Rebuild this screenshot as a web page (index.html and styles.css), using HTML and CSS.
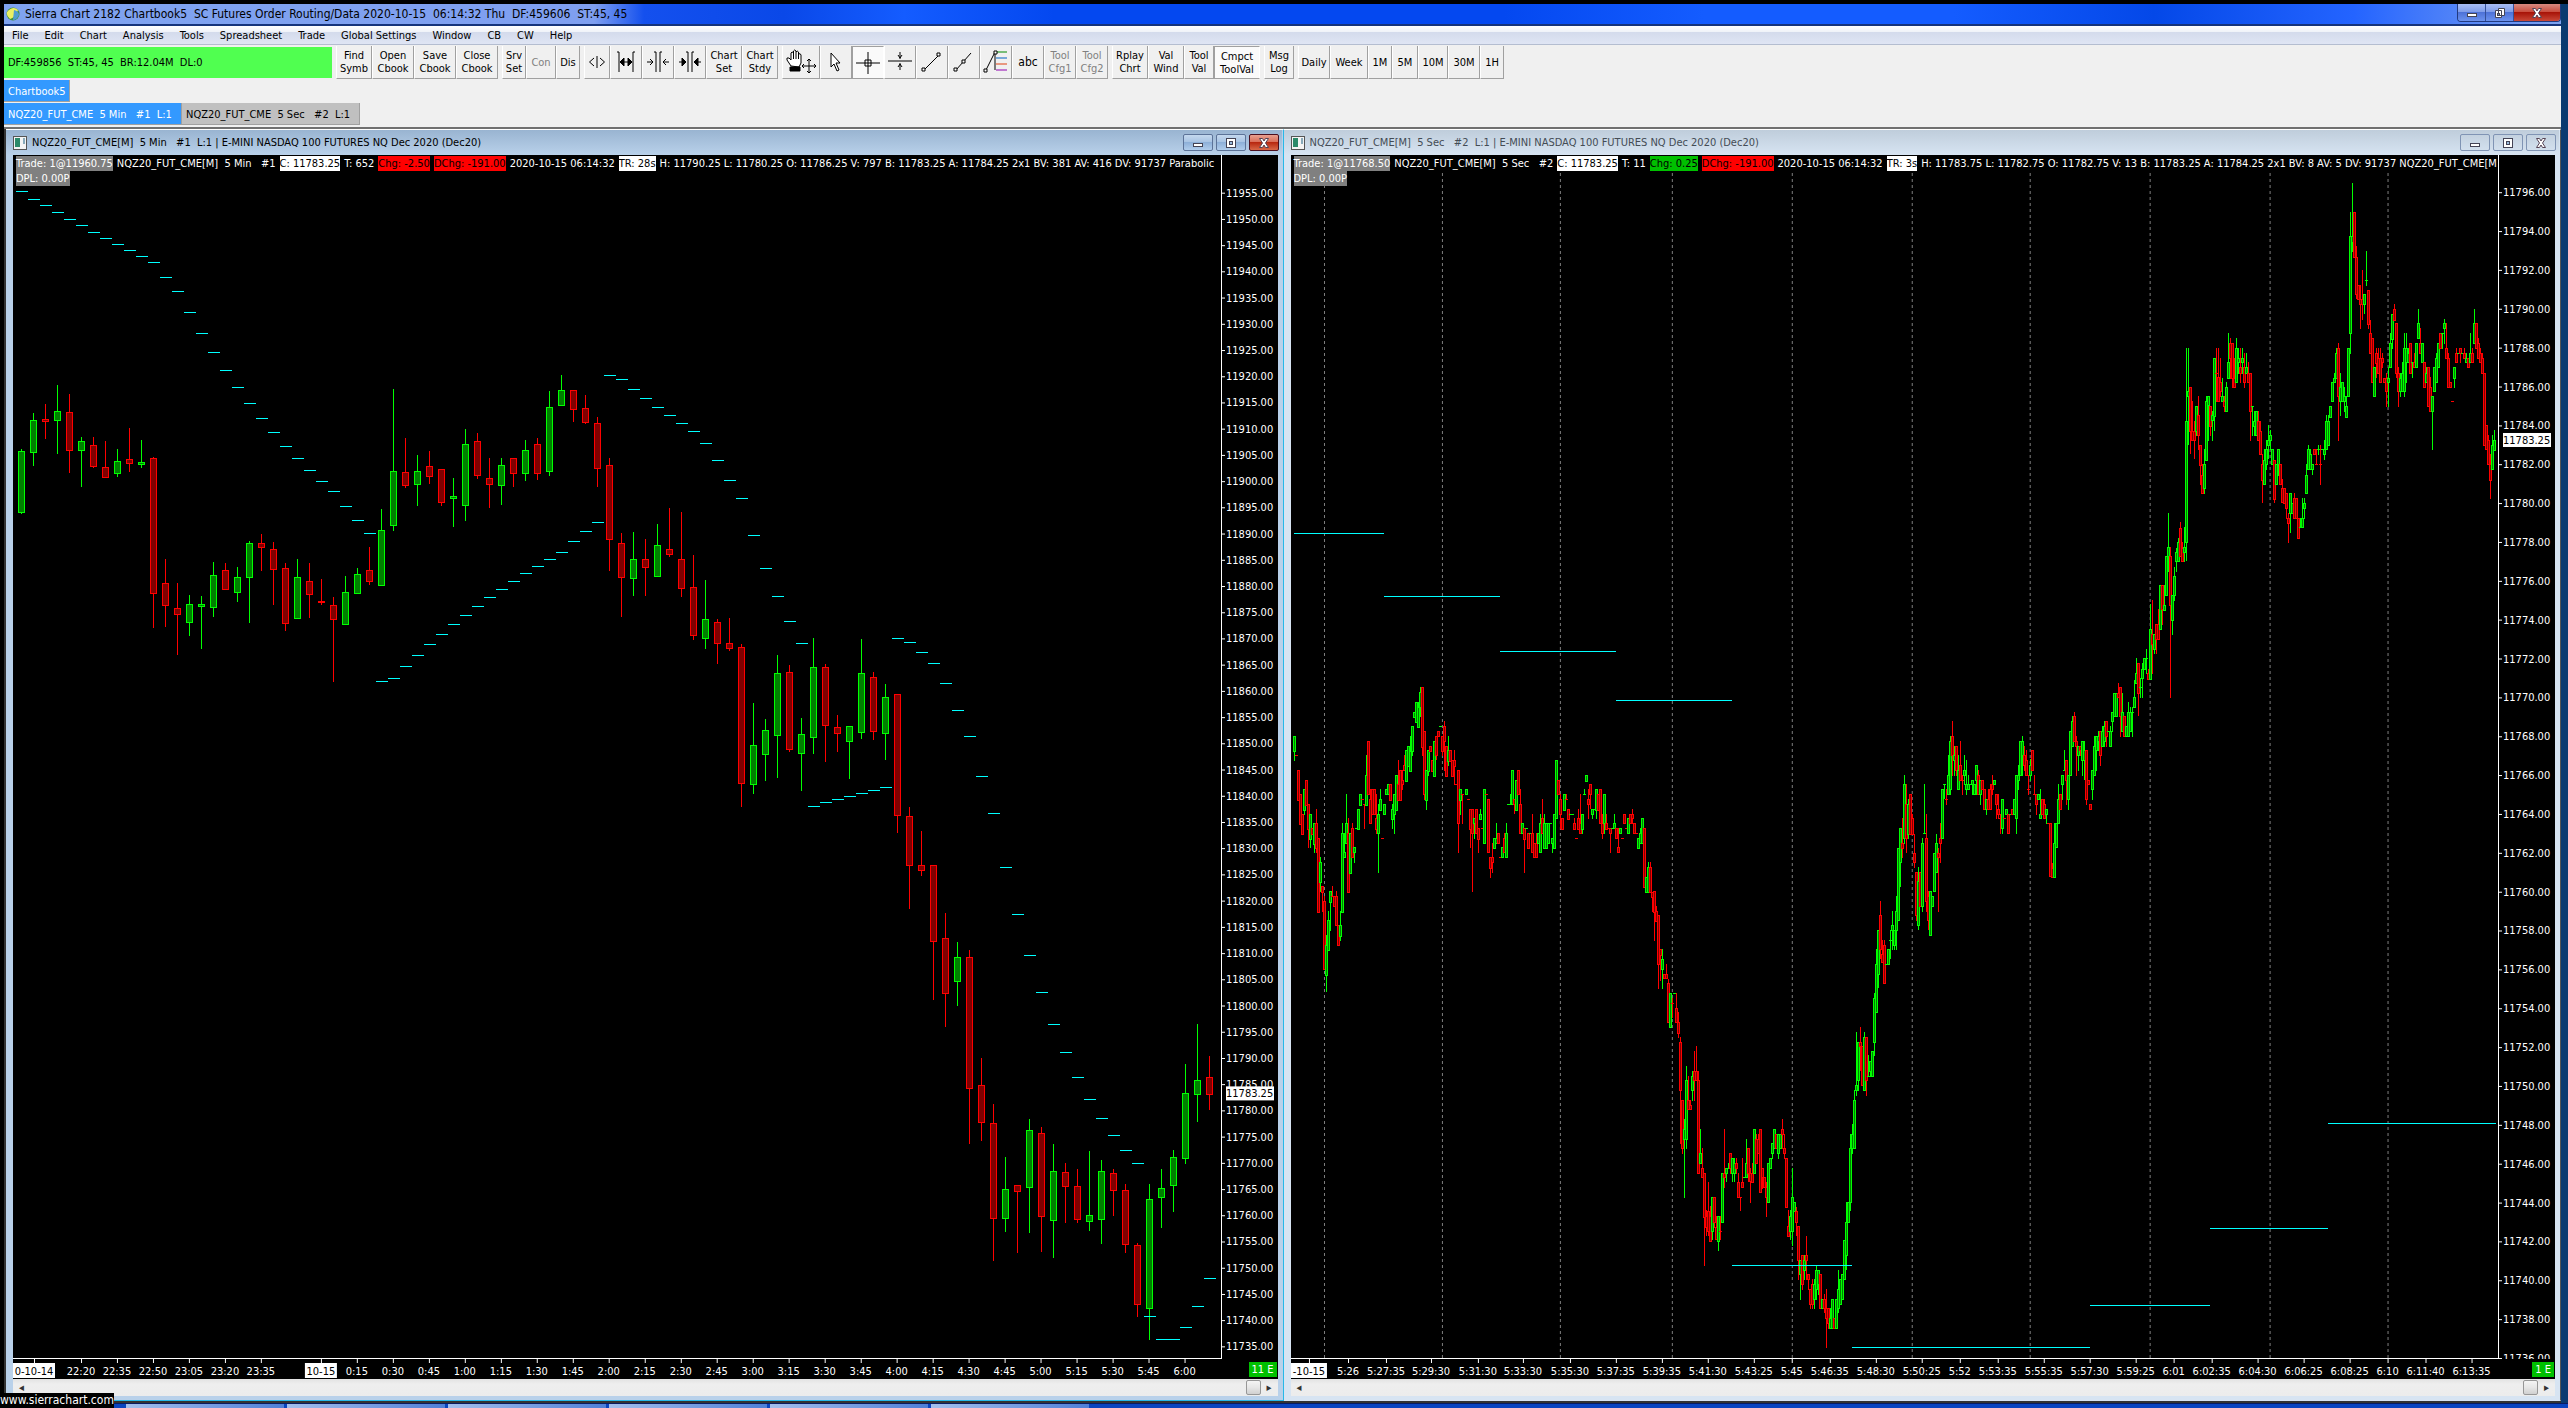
FILE: index.html
```html
<!DOCTYPE html>
<html lang="en">
<head>
    <meta charset="UTF-8">
    <meta name="viewport" content="width=device-width, initial-scale=1.0">
    <title>Sierra Chart 2182 Chartbook5</title>
    <link rel="stylesheet" href="styles.css">
</head>
<body>
    <div class="app">
        <header class="titlebar">
            <svg class="logo" width="14" height="16" viewBox="0 0 14 16"><circle cx="7" cy="8" r="6.5" fill="#3f8f3a"/><path d="M1 6 Q7 -1 12 4 Q9 12 4 13 Q0 10 1 6" fill="#e9ef63"/><path d="M8 4 Q13 5 13 9 Q11 14 7 14" fill="#4e9bd0"/></svg>
            <h1>Sierra Chart 2182 Chartbook5&nbsp; SC Futures Order Routing/Data 2020-10-15&nbsp; 06:14:32 Thu&nbsp; DF:459606&nbsp; ST:45, 45</h1>
            <div class="winbtns">
                <button class="min" aria-label="Minimize"><svg width="12" height="12"><rect x="1.500" y="6.500" width="9" height="3" fill="#fff" stroke="#445"/></svg></button>
                <button class="max" aria-label="Restore"><svg width="12" height="12"><path d="M4.500 1.500h6v7h-6zM1.500 3.500h6v7h-6z" fill="#fff" stroke="#445"/><rect x="3.500" y="6.500" width="2" height="2" fill="#68c" stroke="#445"/></svg></button>
                <button class="close" aria-label="Close"><svg width="12" height="12"><path d="M1.500 1.500h3l1.500 2.500 1.500-2.500h3l-3 4.500 3 4.500h-3l-1.500-2.500-1.500 2.500h-3l3-4.500z" fill="#fff" stroke="#545"/></svg></button>
            </div>
        </header>
        <nav class="menu">
            <a href="#">File</a><a href="#">Edit</a><a href="#">Chart</a><a href="#">Analysis</a><a href="#">Tools</a><a href="#">Spreadsheet</a><a href="#">Trade</a><a href="#">Global Settings</a><a href="#">Window</a><a href="#">CB</a><a href="#">CW</a><a href="#">Help</a>
        </nav>
        <div class="toolbar">
            <div class="status">DF:459856&nbsp; ST:45, 45&nbsp; BR:12.04M&nbsp; DL:0</div>
            <div class="group">
                <button class="w36">Find<br>Symb</button>
                <button class="w42">Open<br>Cbook</button>
                <button class="w42">Save<br>Cbook</button>
                <button class="w42">Close<br>Cbook</button>
            </div>
            <div class="group">
                <button class="w24">Srv<br>Set</button>
                <button class="w30" disabled>Con</button>
                <button class="w24">Dis</button>
            </div>
            <div class="group">
                <button class="w26" aria-label="Bar spacing"><svg width="18" height="22"><path d="M6 7L1.500 11L6 15M12 7l4.500 4L12 15M9 5v12"/></svg></button>
                <button class="w32" aria-label="Widen"><svg width="22" height="26"><path d="M2 3h2v20M20 3h-2v20M6 13h10" /><path class="f" d="M5 13l4-4v8zM17 13l-4-4v8z"/></svg></button>
                <button class="w32" aria-label="Narrow spacing"><svg width="24" height="26"><path d="M8 3h2v20M16 3h-2v20M1 13h6M4 10l3 3-3 3M23 13h-6M20 10l-3 3 3 3"/></svg></button>
                <button class="w32" aria-label="Narrow bars"><svg width="24" height="26"><path d="M8 3h2v20M16 3h-2v20M1 13h6M23 13h-6"/><path class="f" d="M8 13l-4-4v8zM16 13l4-4v8z"/></svg></button>
                <button class="w36">Chart<br>Set</button>
                <button class="w36">Chart<br>Stdy</button>
            </div>
            <div class="group">
                <button class="w38" aria-label="Hand"><svg width="32" height="28"><path class="w" d="M6 18L2 12q-1-3 2-2l2 2V5q1-2 2.500 0V3q1-2 2.500 0v1q1-2 2.500 0v2q2-1 2.500 1v8l-2 4z"/><path d="M8.500 5v6M11 4v7M13.500 5v6"/><path class="f" d="M5 19h10v4H5z"/><path d="M24 11v14M17 18h14M22 13l2-2 2 2M22 23l2 2 2-2M19 16l-2 2 2 2M29 16l2 2-2 2"/></svg></button>
                <button class="w32" aria-label="Pointer"><svg width="16" height="24"><path class="w" d="M3 3v14l3-3 3 7 2-1-3-7h4z"/></svg></button>
                <button class="w32 on" aria-label="Cross"><svg width="26" height="26"><path d="M13 2v22M1 13h24M10 10h6v6h-6z"/></svg></button>
                <button class="w32" aria-label="Horizontal"><svg width="26" height="26"><path d="M1 12h24M13 3v7M13 14v7M11 6l2 3 2-3M11 18l2-3 2 3"/></svg></button>
                <button class="w32" aria-label="Line"><svg width="26" height="26"><path d="M5 21L20 6"/><path class="w" d="M3 19h3v3H3zM18 4h3v3h-3z"/></svg></button>
                <button class="w32" aria-label="Ray"><svg width="26" height="26"><path d="M5 21L20 4"/><path class="w" d="M3 19h3v3H3zM11 11h3v3h-3z"/></svg></button>
                <button class="w32" aria-label="Retracement"><svg width="26" height="28"><path d="M3 22L12 4v18"/><path d="M13 4h11" stroke="#008a00"/><path d="M13 10h11" stroke="#0060c0"/><path d="M13 16h11" stroke="#e04010"/><path d="M13 22h11" stroke="#9000b0"/><path class="w" d="M1 21h3v3H1zM11 3h3v3h-3z"/></svg></button>
                <button class="w32 abc">abc</button>
                <button class="w32" disabled>Tool<br>Cfg1</button>
                <button class="w32" disabled>Tool<br>Cfg2</button>
            </div>
            <div class="group">
                <button class="w36">Rplay<br>Chrt</button>
                <button class="w36">Val<br>Wind</button>
                <button class="w30">Tool<br>Val</button>
                <button class="w46 on">Cmpct<br>ToolVal</button>
            </div>
            <div class="group">
                <button class="w30">Msg<br>Log</button>
            </div>
            <div class="group">
                <button class="w32">Daily</button>
                <button class="w38">Week</button>
                <button class="w24">1M</button>
                <button class="w26">5M</button>
                <button class="w30">10M</button>
                <button class="w32">30M</button>
                <button class="w24">1H</button>
            </div>
        </div>
        <div class="tabs"><a class="cur" href="#">Chartbook5</a></div>
        <div class="tabs sheets"><a class="cur" href="#">NQZ20_FUT_CME&nbsp; 5 Min&nbsp;&nbsp; #1&nbsp; L:1</a><a href="#">NQZ20_FUT_CME&nbsp; 5 Sec&nbsp;&nbsp; #2&nbsp; L:1</a></div>

        <main class="mdi">
            <section class="win active">
                <div class="wintitle">
                    <svg width="14" height="14"><rect x=".5" y=".5" width="13" height="13" fill="#f4f4f4" stroke="#555"/><path d="M2 2h5v9H2z" fill="#2c8a6a"/><path d="M10 2h2v6h-2z" fill="#8ab"/></svg>
                    <h2>NQZ20_FUT_CME[M]&nbsp; 5 Min&nbsp;&nbsp; #1&nbsp; L:1 | E-MINI NASDAQ 100 FUTURES NQ Dec 2020 (Dec20)</h2>
                    <button aria-label="Minimize chart"><svg width="12" height="12"><rect x="1.500" y="6.500" width="9" height="3" fill="#fff" stroke="#445"/></svg></button>
                    <button aria-label="Maximize chart"><svg width="12" height="12"><rect x="1.500" y="1.500" width="9" height="9" fill="#fff" stroke="#445"/><rect x="4.500" y="4.500" width="3" height="3" fill="#9bd" stroke="#445"/></svg></button>
                    <button class="close" aria-label="Close chart"><svg width="12" height="12"><path d="M1.500 1.500h3l1.500 2.500 1.500-2.500h3l-3 4.500 3 4.500h-3l-1.500-2.500-1.500 2.500h-3l3-4.500z" fill="#fff" stroke="#545"/></svg></button>
                </div>
                <div class="chart">
                    <div class="plot">
                        <svg id="plot1" viewBox="13 155 1208 1204" preserveAspectRatio="none"></svg>
                        <div class="info">
                            <p><span class="gray">Trade: 1@11960.75</span><span>NQZ20_FUT_CME[M]&nbsp; 5 Min&nbsp;&nbsp; #1</span><span class="white">C: 11783.25</span><span>T: 652</span><span class="red">Chg: -2.50</span><span class="red">DChg: -191.00</span><span>2020-10-15 06:14:32</span><span class="white">TR: 28s</span><span>H: 11790.25 L: 11780.25 O: 11786.25 V: 797 B: 11783.25 A: 11784.25 2x1 BV: 381 AV: 416 DV: 91737 Parabolic</span></p>
                            <p><span class="gray">DPL: 0.00P</span></p>
                        </div>
                    </div>
                    <svg class="prices" id="prices1"></svg>
                    <svg class="times" id="times1"></svg>
                    <span class="mode">11 E</span>
                </div>
                <div class="scroll"><button aria-label="Scroll left">◂</button><input type="range" value="100" aria-label="Chart position"><button aria-label="Scroll right">▸</button></div>
            </section>
            <section class="win">
                <div class="wintitle">
                    <svg width="14" height="14"><rect x=".5" y=".5" width="13" height="13" fill="#f4f4f4" stroke="#555"/><path d="M2 2h5v9H2z" fill="#2c8a6a"/><path d="M10 2h2v6h-2z" fill="#8ab"/></svg>
                    <h2>NQZ20_FUT_CME[M]&nbsp; 5 Sec&nbsp;&nbsp; #2&nbsp; L:1 | E-MINI NASDAQ 100 FUTURES NQ Dec 2020 (Dec20)</h2>
                    <button aria-label="Minimize chart"><svg width="12" height="12"><rect x="1.500" y="6.500" width="9" height="3" fill="#fff" stroke="#445"/></svg></button>
                    <button aria-label="Maximize chart"><svg width="12" height="12"><rect x="1.500" y="1.500" width="9" height="9" fill="#fff" stroke="#445"/><rect x="4.500" y="4.500" width="3" height="3" fill="#9bd" stroke="#445"/></svg></button>
                    <button aria-label="Close chart"><svg width="12" height="12"><path d="M1.500 1.500h3l1.500 2.500 1.500-2.500h3l-3 4.500 3 4.500h-3l-1.500-2.500-1.500 2.500h-3l3-4.500z" fill="#fff" stroke="#545"/></svg></button>
                </div>
                <div class="chart">
                    <div class="plot">
                        <svg id="plot2" viewBox="1291 155 1208 1204" preserveAspectRatio="none"></svg>
                        <div class="info">
                            <p><span class="gray">Trade: 1@11768.50</span><span>NQZ20_FUT_CME[M]&nbsp; 5 Sec&nbsp;&nbsp; #2</span><span class="white">C: 11783.25</span><span>T: 11</span><span class="green">Chg: 0.25</span><span class="red">DChg: -191.00</span><span>2020-10-15 06:14:32</span><span class="white">TR: 3s</span><span>H: 11783.75 L: 11782.75 O: 11782.75 V: 13 B: 11783.25 A: 11784.25 2x1 BV: 8 AV: 5 DV: 91737 NQZ20_FUT_CME[M</span></p>
                            <p><span class="gray">DPL: 0.00P</span></p>
                        </div>
                    </div>
                    <svg class="prices" id="prices2"></svg>
                    <svg class="times" id="times2"></svg>
                    <span class="mode">1 E</span>
                </div>
                <div class="scroll"><button aria-label="Scroll left">◂</button><input type="range" value="100" aria-label="Chart position"><button aria-label="Scroll right">▸</button></div>
            </section>
        </main>
    </div>
    <div class="taskbar"><i></i><i></i><i></i><i></i><i></i><i></i></div>
    <div class="watermark">www.sierrachart.com</div>
    <script src="chart.js"></script>
</body>
</html>
```

FILE: styles.css
```css
* {
    margin: 0;
    padding: 0;
    box-sizing: border-box;
}

body {
    position: relative;
    display: flex;
    flex-direction: column;
    height: 100vh;
    padding-top: 4px;
    background: #000;
    font: 11px/16px "DejaVu Sans Condensed", "DejaVu Sans", sans-serif;
    color: #000;
    overflow: hidden;
}

a {
    color: inherit;
    text-decoration: none;
}

button {
    font: inherit;
    color: inherit;
    border: 0;
    background: none;
}

svg {
    display: block;
    flex: none;
}

.app {
    flex: 1;
    min-height: 0;
    display: flex;
    flex-direction: column;
    border-left: 4px solid #000;
    border-right: 7px solid #0a3a70;
    background: #f0f0f0;
}

/* main title bar */
.titlebar {
    display: flex;
    align-items: center;
    height: 22px;
    padding-left: 2px;
    border-bottom: 2px solid #16347c;
    background: linear-gradient(90deg, #7fa3f0 0, #7f9ff0 590px, #1450ee 640px, #0a48e8 780px, #145cff 900px, #0448f0 1050px, #0448f0 1500px, #145cff 1700px, #145cff 1950px, #0448e8 2150px, #2464ff 2350px, #7fa3f0 100%);
}

.titlebar h1 {
    flex: 1;
    padding-left: 5px;
    font-size: 12px;
    font-weight: normal;
}

.winbtns {
    display: flex;
    align-self: flex-start;
    height: 18px;
    border: 1px solid #223a80;
    border-top: 0;
    border-radius: 0 0 4px 4px;
    overflow: hidden;
}

.winbtns button {
    display: flex;
    align-items: center;
    justify-content: center;
    width: 28px;
    border-right: 1px solid #34509a;
    background: linear-gradient(#a8bdf4, #7c9ae8 50%, #4d72d8 50%, #6c92ee);
}

.winbtns .close {
    width: 46px;
    border-right: 0;
    background: linear-gradient(#d88a80, #c8493a 50%, #a81408 50%, #c84838);
}

.menu {
    display: flex;
    align-items: center;
    gap: 16px;
    height: 19px;
    padding: 2px 0 0 8px;
    border-bottom: 1px solid #b4bdd0;
    background: linear-gradient(#fff, #eef1f8 35%, #d4dbec 36%, #dfe5f4);
}

/* toolbar */
.toolbar {
    display: flex;
    align-items: flex-start;
    gap: 4px;
    height: 35px;
    padding-top: 1px;
}

.status {
    width: 328px;
    height: 31px;
    margin-top: 1px;
    padding-left: 4px;
    line-height: 31px;
    background: #50ff50;
}

.group {
    display: flex;
    height: 33px;
}

.group button {
    display: flex;
    align-items: center;
    justify-content: center;
    height: 33px;
    line-height: 13px;
    border-right: 1px solid #a0a0a0;
    border-bottom: 1px solid #a0a0a0;
    border-left: 1px solid #fff;
    background: #f0f0f0;
    white-space: nowrap;
}

.group .on {
    border-top: 1px solid #a0a0a0;
    border-left-color: #a0a0a0;
    border-right-color: #fff;
    background: #fafafa;
}

.group button:disabled {
    color: #808080;
}

.group .abc {
    font-size: 12px;
}

.w24 { width: 24px; }
.w26 { width: 26px; }
.w30 { width: 30px; }
.w32 { width: 32px; }
.w36 { width: 36px; }
.w38 { width: 38px; }
.w42 { width: 42px; }
.w46 { width: 46px; }

.group svg path {
    fill: none;
    stroke-width: 1;
}

.group svg path:not([stroke]) {
    stroke: #000;
}

.group svg .f {
    fill: #000;
}

.group svg .w {
    fill: #fff;
}

.tabs {
    display: flex;
    align-items: flex-start;
    height: 22px;
}

.tabs a {
    height: 22px;
    padding: 2px 3px 0 4px;
    line-height: 19px;
    border-right: 1px solid #a0a0a0;
    border-bottom: 1px solid #a0a0a0;
    background: #c0c0c0;
    white-space: pre;
}

.tabs .cur {
    background: #3399ff;
    color: #fff;
}

.sheets {
    height: 25px;
    padding-top: 1px;
}

.sheets a {
    min-width: 178px;
}

/* chart windows */
.mdi {
    flex: 1;
    min-height: 0;
    display: flex;
    padding: 0 0 2px 2px;
    border-top: 2px solid #707070;
    background: #333;
}

.win {
    flex: 1;
    min-width: 0;
    display: flex;
    flex-direction: column;
    padding: 0 5px 4px 7px;
    border-top: 1px solid #fff;
    border-right: 1px solid #555;
    border-bottom: 1px solid #d7e4f2;
    background: #d7e4f2;
}

.win.active {
    border-right: 1px solid #27b8e8;
    border-bottom: 1px solid #27b8e8;
    background: #b9d1ea;
}

.wintitle {
    display: flex;
    align-items: center;
    gap: 3px;
    height: 25px;
    margin: 0 -4px 0 -7px;
    padding: 0 3px 0 7px;
    background: linear-gradient(#bfcddb, #d7e4f2);
    color: #444c55;
}

.active .wintitle {
    background: linear-gradient(#99b4d1, #b9d1ea);
    color: #000;
}

.wintitle h2 {
    flex: 1;
    padding-left: 2px;
    font-size: 11px;
    font-weight: normal;
    white-space: nowrap;
}

.wintitle button {
    display: flex;
    align-items: center;
    justify-content: center;
    width: 30px;
    height: 17px;
    border: 1px solid #8094b4;
    border-radius: 2px;
}

.active .wintitle button {
    border-color: #5c7398;
    background: linear-gradient(#c4d8ee, #a6c2e2 50%, #8eb0d8 50%, #b0cdec);
}

.active .wintitle .close {
    border-color: #4c1020;
    background: linear-gradient(#e8a090, #d86a54 50%, #b82810 50%, #d86848);
}

.chart {
    flex: 1;
    min-height: 0;
    display: grid;
    grid-template-columns: 1fr 57px;
    grid-template-rows: 1fr 20px;
    background: #000;
    color: #fff;
}

.plot {
    position: relative;
    min-width: 0;
    min-height: 0;
    overflow: hidden;
}

.plot svg {
    position: absolute;
    width: 100%;
    height: 100%;
    shape-rendering: crispEdges;
}

/* values line over the plot */
.info {
    position: absolute;
    top: 1px;
    left: 3px;
    line-height: 15px;
    white-space: nowrap;
}

.info p {
    display: flex;
    gap: 4px;
}

.gray { background: #808080; }
.white { background: #fff; color: #000; }
.red { background: #f00; color: #000; }
.green { background: #00c000; color: #000; }

.prices {
    width: 57px;
    height: 100%;
    border-left: 1px solid #fff;
}

.times {
    grid-row: 2;
    grid-column: 1 / 3;
    width: 100%;
    height: 20px;
}

.chart text {
    fill: #fff;
}

.chart .label-dark {
    fill: #000;
}

.mode {
    grid-row: 2;
    grid-column: 2;
    justify-self: end;
    align-self: center;
    padding: 0 3px;
    margin-right: 1px;
    line-height: 15px;
    background: #00c000;
}

.scroll {
    display: flex;
    height: 17px;
    background: linear-gradient(#e2e2e2, #eee 30%, #ececec);
}

.scroll button {
    width: 17px;
    line-height: 17px;
    text-align: center;
    color: #333;
}

.scroll input {
    flex: 1;
    min-width: 0;
    height: 17px;
    appearance: none;
    background: none;
}

.scroll input::-webkit-slider-thumb {
    appearance: none;
    width: 15px;
    height: 15px;
    border: 1px solid #979797;
    border-radius: 2px;
    background: linear-gradient(#f4f4f4, #e6e6e6 50%, #d0d0d0);
}

/* bottom strip */
.taskbar {
    display: flex;
    gap: 3px;
    height: 5px;
    padding-left: 126px;
    border-top: 1px solid #0a1c60;
    background: #0a44c0;
}

.taskbar i {
    width: 158px;
    background: linear-gradient(90deg, #a4bfec, #4f7fd8);
}

.watermark {
    position: absolute;
    left: 0;
    bottom: 0;
    min-width: 112px;
    font-size: 12px;
    line-height: 15px;
    background: #000;
    color: #fff;
}
```

FILE: chart.js
```js
const UP = ["#00ff00", "#008000"],
      DOWN = ["#ff0000", "#800000"];

// every bar: u/d, then high,top,bottom,low  (high,top,bottom / top,bottom / flat)
const bars5min = `
u449,451,512,513 u413,420,452,465 d404,419,421,438 u385,411,420,453 d394,412,450,472
u437,441,450,486 d437,445,466,467 d441,467,477,477 u449,461,473,476 d428,459,463,471
u440,462,464,467 d457,458,593,627 d559,583,605,626 d583,608,614,654 u595,604,622,635
u596,604,606,648 u562,575,607,616 d563,570,589,589 u567,577,592,601 u541,543,577,622
d534,543,547,570 d542,549,569,604 d563,568,623,630 u559,577,618,618 d563,581,594,617
d579,601,602,604 d597,605,619,681 u576,592,624,624 u568,574,593,593 d547,570,581,584
u509,530,585,585 u389,471,525,530 d438,472,485,487 u455,471,484,505 d451,466,476,483
d469,469,502,505 u478,496,498,526 u429,444,505,520 d433,441,475,478 d458,478,484,507
u458,465,485,504 d458,458,473,486 u440,450,473,480 d438,444,473,479 u391,407,471,475
u375,390,405,405 d390,390,409,421 d395,408,422,423 d417,423,468,486 d458,465,539,570
d533,543,577,616 u532,559,578,595 d539,559,567,595 u524,545,576,576 d508,549,554,556
d512,559,588,596 d555,587,635,639 u580,619,638,648 d619,622,643,663 d618,643,648,650
d644,647,783,806 u703,745,784,793 u719,730,754,780 u655,673,735,777 d665,672,749,751
u718,734,753,790 u638,667,737,753 d664,667,725,761 d715,727,733,751 u726,726,741,778
u639,673,732,738 d672,677,731,739 u684,697,733,759 d694,694,815,832 d807,816,865,908
d831,865,870,875 d865,865,941,999 d913,938,993,1026 u942,957,981,1005 d950,957,1088,1143
d1058,1085,1122,1140 d1104,1123,1218,1260 u1157,1189,1218,1231 d1185,1185,1191,1252 u1119,1130,1187,1232
d1127,1133,1216,1251 u1144,1171,1220,1257 d1163,1172,1186,1222 d1169,1186,1219,1222 u1151,1215,1221,1230
u1160,1171,1219,1243 d1169,1173,1190,1215 d1184,1190,1244,1252 d1243,1245,1304,1316 u1184,1199,1308,1339
u1169,1188,1197,1227 u1150,1157,1185,1211 u1064,1093,1158,1163 u1024,1080,1094,1121 d1056,1077,1094,1109`;

// first number of a line is the x of its first bar
const bars5sec = `
1294 u736,736,751,760 d755 d770,800 d794,824 d814,834 u789,789,810,814 d780,805 d804,804,829,847 u814,814,839,847 d828,834
1314 u823,823,844,852 d809,823,848,852 d838,912 u857,862,882,891 d886,886,892,911 d896,901,969 u935,945,975,991 u911,920,950 u891,891,902,930 d886,896,896
1334 d896,906 d891,896,925 d925,945 u911,925,936,940 u823,833,912 u833,852,857 u794,823,843 d818,833,892 u833,873 d823,828,857
1354 u847,847,852,862 u828 u809,829 u794,805 d799 d804,804,804,828 u755,775,805 d741,794 d789,799,823 d789,814
1374 d789,814 d794,818,829,833 u804,814,833,872 u789,799,810 d838 u804,814 u789,794 u784,794 d784,800 u804,809,819,828
1394 u794,794,814,833 u775,810 d760,784,800 d770,800 d770,780,784,789 d755,765,770 u750,781 u746,766 u736,751,771 u726,726,751,755
1414 u712,717 u702,722 u702,707,727 u687,692,707,716 d687,687,747,755 d731,731,794,799 u770,770,800,809 u750,750,771,775 d746,751 d760,771
1434 u741,776 d736,736,755,759 d731,736 u726 d736,736,751,755 d721,726,741,770 d746,776 u736,750,761,765 d750,761 d760,776
1454 d750,760,766,784 d784 d770,770,823,852 u789,789,800,814 d794,794,794,823
1466 u789,794 d799 d809,809,829,847 d809,809,833,891 u818,818,823,838 d809,833 d828,828,839,852 u809,814,819 d828 u789,843
1486 d794 d799,852 d857,857,868,877 d843,857,862,872 u838,848 u823,838,843 d833,843 d857 u847,857 d833,838,852
1506 u823,833,857 u804 u794,804,804 u770,804 d799,799,804,813 u780,810 d770,794 d789,804,833 u823,833 d828,828,839,872
1526 u828 d833,848 u833 d814,833,852 d843,857 d833,843,857 u833,843 u814,823,852 d799,818,833 u814,823,848
1546 u823,848 u823,843 u823 u838,838,843,852 u814,848 u760,818 d780,794 d794,799,814,828 d818,829 u794,810
1566 d794,799,799 d809,819 u814 u814 d818,823,829 d838 d809,818,829 d794,823,833 u814,814,829,833 u789,794,794
1586 u775,781 d789,799,804,818 d784,784,794,808 u809,809,814,818 u809 u789,789,810,818 d794,810 d789,823 d814,823,833,838 u794,794,823,833
1606 d814,823,829 d828 d828,828,833,852 u828 u814,823,828 d828,838 d828,847,852 u828,833 d838 d814,823
1626 d828 u818,833 d814,823 d809,814,818,823 d823,833 d833 u838,848 u828,833,843 u818,843 d828,887
1646 u877,892 u862,867,892 d862,867,892 d892,892,897,911 d891,891,912,940 d906,911,921 d915,915,964,988 d949,949,955,980 u949,959,969,988 d974,978
1666 d964,974,978 d979,983,1022 u993,1027 d998,1003,1003,1017 u993 d993,1008,1022 d1012,1022,1033,1037 d1037,1042,1090,1143 d1100,1100,1148,1153 u1119,1129,1139,1197
1686 u1066,1080,1139,1148 d1076,1100,1109 d1100,1105,1109 u1071,1076,1090,1100 d1051,1071,1080,1100 d1046,1071,1080 d1071,1080,1173 u1129,1153,1163 d1148,1168,1177 d1173,1173,1217,1265
1706 d1210,1216,1227,1235 d1182,1211,1231,1235 d1206,1216,1241 u1197,1197,1231,1239 d1197,1197,1222,1227 d1216,1227,1239 u1216,1216,1241,1250 d1216,1231,1231,1239 u1173,1222 d1129,1173,1177,1187
1726 u1168,1168,1173,1181 u1163,1168,1168 d1153,1153,1168,1173 u1158,1158,1173,1181 u1158,1163,1173,1181 d1158,1163,1168,1173 d1173,1182,1197 d1197,1197,1197,1210 d1158,1182,1187 u1177
1746 u1139,1163,1177 d1148,1148,1173,1181 d1168,1173,1181,1202 d1163,1173,1182 u1129,1173 d1134,1139,1163 d1134,1139,1153 d1129,1192 d1168,1168,1177,1188 d1177,1187
1766 d1182,1187,1197,1216 u1163,1202 u1158,1168 u1143,1143,1153,1158 u1129,1148 d1134,1148 u1134,1134,1153,1158 u1134,1148 d1119,1129,1134,1148 d1134,1148,1153,1158
1786 d1158,1207 d1210,1226,1236 u1210,1216,1231,1239 u1168,1197,1231,1245 u1202,1211 d1207,1211,1222,1235 d1226,1226,1260,1279 u1260,1260,1274,1299 d1255,1255,1284,1289 u1255,1260,1270,1279
1806 d1236,1255,1260,1279 d1274,1274,1279,1289 d1289,1289,1304,1308 d1279,1284,1304,1308 u1279,1284,1299,1308 u1265,1270,1289,1299 u1270,1270,1284,1294 d1274,1308 u1299,1308 d1294,1299,1308,1312
1826 d1289,1308,1318,1347 d1308,1308,1323,1328 u1308,1318,1328 u1299,1328 d1318,1328 u1299,1328 u1270,1289,1308,1312 u1279,1304 u1274,1299 u1240,1279
1846 u1202,1222,1255,1269 u1202,1222 u1134,1148,1202,1210 u1124,1134,1148,1153 u1090,1100,1148 u1032,1085,1090,1095 u1042,1042,1080,1090 d1027,1042,1046,1070 d1046,1085 u1032,1037,1090
1866 d1037,1037,1080,1095 u1055,1076,1076 u1061,1061,1071,1076 u1051,1076 u993,998,1042,1055 u949,964,1012 u930,930,974,987 d901,915,949,958 d940,954,962 d940,945,983
1886 u964 u949,964 u930,940,940,958 u911,925,930,949 u930,930,945,949 u896,911,930,949 u848,920 u828,828,862,886 d818,843,848,857 u775,784,838,843
1906 d784,804,838,852 u799,804,834,838 d794,834 d814,818,834 d834,853,862,867 d872,872,915,920 u867,881,925,929 d872,906 u838,843,906,911 u784,833,833
1926 d814,838,901,911 d891,896,920,929 u891,935 u896,906 u853,891 u834,843,872 d848,853,857,911 d823,838,843,862 u789,838 u784,784,784,798
1946 d789,799,799,804 u755,775,794 u736,741,789,794 d721,736,755,775 u746,755,760,775 d746,746,770,775 u755,770,789 d741,765,780 d775,780,780,794 u755,770,775,784
1966 u760,784,789,794 u775,784,789 u784 u780,780,784,794 u784,794 u765,765,780,794 d770,775,794 u780,780,794,804 d780,789 d789,809
1986 u799,799,809,814 d789,799,809 d784,789,809 d775,784,789,794 u780,784 d794,794,804,818 d794,809,814,818 d814,818,818,833 u799,799,828,833 d818
2006 u809,814 d814,833 u814 d809,814 u799,814 u775,775,818,833 u765,775,780,789 u741,775 u736,741,755,775 d746,755,765,770
2026 d750,760,775 d775,789,789,794 u759,765,775,780 d750,770 d775,794,794 d794,794,804,814 u794,799 u789,814,818 d799,814 d799,804,818
2046 u809,809,814,823 d823 d823,876 d863,868,877 u823,843,877 u823,847 u784,799,823 d794,809 u775,775,784,799 u750,770,770
2066 d760,760,780,804 u775,775,799,809 u731,775 u716,721,746 d712,716,741 d736,741,746,775 u746,746,755,770 d746,746,750,755 u741,741,760,775 u741,750,760,779
2086 d750,750,799,804 d780,784 d804,809 u770,770,789,799 u736,746,775 u736,736,750,770 u731,736,741,750 d731,731,755,765 u726,731,746 u721,726,741,746
2106 d721,721,736,746 u731 u726,731,746 u712,712,721,731 u693,716 u693,716 d683,693,697 d687,687,716,736 u693,712,731 d716,736
2126 u726,736 u702,712,736 u707,712,731 u707,712,712,736 u680,697,707 u658,673,683 d663,663,693,715 u678,687,687,697 u663,669,678,697 u658,669
2146 u649,658,658,673 d669,673,679 u604,629,679 d600,634,644,673 u634,634,649,653 d624,624,639,653 d609,624,639 u585,629 d585,585,609,624 u585,605,610
2166 u556,595 u513,547,556,571 d547,556,605,697 u595,595,620,634 u567,576,595,600 u548,552,561,571 u538,542,561 d522,528,556 d542,548,561 u527,547,552,561
2186 u348,421,542,560 u348,391,396,444 d387,387,431,453 d401,431,440 d421,431,440,458 u406,406,431,435 d396,415,435,449 d445,445,465,484 d464,475,493 u449,464,488,493
2206 u396,401,460 u396,396,405,440 d406,406,426,435 u411,415,420,440 u358,358,416,430 d348,373,373,401 d348,377,401 d358,382,391,396 u378,396,401 d396,401,406,411
2226 u382,387,411 u333,362,378 d338,343,358,378 d343,343,378,387 d358,378,387 u338,348,382 u348,358,362,373 d348,367,373,382 u348,358,362,373 d353,367,382,387
2246 u353,367,373 d362,373,382 d373,373,411,440 u406,406,406,435 u411,421,426,435 u411,435 d411,421,440 d421,431,454 d454,464,480,502 u449,460,484
2266 u440,449,464,469 u425,440,445,458 u430,435,440,449 u449,464 d460,460,499,502 u464,484 u449,449,464,475 d464,484 d479,488,502 d488,503
2286 d493,493,508,518 d513,518,523,542 u493,493,513,532 u503,513 d493,498,518 d498,518 d518,538 u518,527,527 u498,518,527 u498,503,508,518
2306 u464,475,493 u445,449,469 u449,454,469 u464,464,469,474 d449,454 d449,464,464 u445,449,449,454 d445,464,464,484 u449 u440,449,454,459
2326 u415,421,449 u415,421,445 u406,417 u382,401 u373,378,382 u348,353,378 d343,348,396,440 u373,387,401,415 u382,401 u387,396,401,411
2346 u396,406,417 u348,396 u212,236,333,353 u183,236,242,251 d212,257 d246,257,294,298 d285,299 d285,299,304,328 d270,299,304,319 u294,294,304,313
2366 u251,280,280,285 d290,290,324,328 d320,333,353 d338,382 u367,396 d348,353,363,377 d348,358,373 d348,358,382 d353,358,362,367 d378,382
2386 d373,378,391,406 u367,378,382,406 u333,343,367 u314,314,339,348 d304,309,320 d323,323,373,377 d367,373,391,406 u373,378,391,396 u362,373,391 u333,348,391,396
2406 u333,348,362,382 u348,353,362 d343,373 u362,362,362,377 d353,362,367 u343,367 u309,323,338 d328,343,353 u343,362 d362,387
2426 u367,373,382 d367,406 d377,387,411 u396,396,411,449 u367,391 u353,358,382 u343,367 d333,348 u333,333,333,348 u319,323,328,343
2446 d323,348,358 d353,358,387 d382,387 d401 u367,367,378,387 d348,353,362 u353 d348,348,353,362 u353 d348,353,358
2466 u353,358,362 d358,367 u333,353,362 d348,353,362 u309,323,343 d323,348 d338,343,358 d348,353,362 d353,358,373 d373,445
2486 d425,449 d435,440,464 d454,464,480,498 u435,445,469 u430,440,450`;

// parabolic, one value for each 5 min bar
const sar5min = [191, 199, 205, 212, 219, 225, 232, 238, 244, 250, 256, 262, 277, 291, 312, 333, 352, 370, 387, 403,
    418, 432, 446, 458, 470, 481, 491, 506, 520, 533, 681, 678, 666, 655, 644, 634, 624, 615, 606, 597,
    589, 581, 573, 566, 559, 552, 541, 531, 522, 375, 379, 389, 398, 407, 415, 423, 431, 443, 460, 480,
    498, 535, 568, 596, 621, 643, 806, 802, 799, 796, 793, 790, 787, 638, 642, 652, 663, 683, 710, 736,
    776, 813, 867, 914, 955, 992, 1024, 1052, 1077, 1099, 1118, 1135, 1150, 1163, 1316, 1339, 1339, 1327, 1306, 1278];
const sar5sec = [[1294, 1384, 533], [1384, 1500, 596], [1500, 1616, 651], [1616, 1732, 700], [1732, 1852, 1265],
    [1852, 2090, 1347], [2090, 2210, 1305], [2210, 2328, 1228], [2328, 2496, 1123]];
const grid = [1324, 1442, 1560, 1672, 1792, 1912, 2030, 2150, 2270, 2388];

const rect = (x, y, w, h, fill) => `<rect x="${x}" y="${y}" width="${w}" height="${h}" fill="${fill}"/>`;

function bar(x, token, half) {
    const color = token[0] === "u" ? UP : DOWN;
    let v = token.slice(1).split(",").map(Number);
    if (v.length === 1) v = [v[0], v[0], v[0], v[0]];
    if (v.length === 2) v = [v[0], v[0], v[1], v[1]];
    if (v.length === 3) v.push(v[2]);
    const [high, top, bottom, low] = v;
    let s = rect(x, high, 1, low - high + 1, color[0]);
    s += rect(x - half, top, half * 2 + 1, bottom - top + 1, color[0]);
    if (bottom - top > 1) s += rect(x - half + 1, top + 1, half * 2 - 1, bottom - top - 1, color[1]);
    return s;
}

// 5 min chart
let out = "";
bars5min.trim().split(/\s+/).forEach((t, i) => out += bar(21 + i * 12, t, 3));
sar5min.forEach((y, i) => out += rect(16 + i * 12, y, 12, 1, "#00ffff"));
document.getElementById("plot1").innerHTML = out + rect(13, 1358, 1208, 1, "#fff");

// 5 sec chart
out = grid.map(x => `<path d="M${x}.5 173V1358" stroke="#808080" stroke-dasharray="3 3"/>`).join("");
bars5sec.trim().split("\n").forEach(line => {
    const t = line.split(" ");
    for (let i = 1; i < t.length; i++) out += bar(Number(t[0]) + (i - 1) * 2, t[i], 1);
});
sar5sec.forEach(([a, b, y]) => out += rect(a, y, b - a, 1, "#00ffff"));
document.getElementById("plot2").innerHTML = out + rect(1291, 1358, 1208, 1, "#fff");

function prices(id, first, last, step, y0, unit) {
    let s = "";
    const at = p => ((y0 + (first - p) * unit - 155) / 1204 * 100).toFixed(2) + "%";
    for (let p = first; p >= last; p -= step) {
        s += `<svg y="${at(p)}" overflow="visible"><path d="M0 .5h3" stroke="#fff"/><text x="4" y="4">${p}.00</text></svg>`;
    }
    s += `<svg y="${at(11783.25)}" overflow="visible">${rect(4, -7, 48, 14, "#fff")}<text class="label-dark" x="4" y="4">11783.25</text></svg>`;
    document.getElementById(id).innerHTML = s;
}
prices("prices1", 11955, 11735, 5, 192.7, 5.244);
prices("prices2", 11796, 11736, 2, 192.2, 19.43);

function times(id, left, list) {
    document.getElementById(id).innerHTML = list.map(([x, label, box]) => {
        const back = box ? rect(-box / 2, 4, box, 15, "#fff") : "";
        return `<svg x="${((x - left) / 1265 * 100).toFixed(2)}%" overflow="visible"><path d="M.5 0v4" stroke="#fff"/>${back}<text ${box ? 'class="label-dark"' : ""} text-anchor="middle" y="16">${label}</text></svg>`;
    }).join("");
}

const t1 = [[34, "0-10-14", 42]];
["22:20", "22:35", "22:50", "23:05", "23:20", "23:35"].forEach((l, i) => t1.push([81 + i * 36, l]));
t1.push([321, "10-15", 32]);
for (let m = 15; m <= 360; m += 15) {
    t1.push([321 + m / 15 * 36, Math.floor(m / 60) + ":" + String(m % 60).padStart(2, "0")]);
}
times("times1", 13, t1);
times("times2", 1291, [[1309, "-10-15", 36], [1348, "5:26"], [1386, "5:27:35"], [1431, "5:29:30"], [1478, "5:31:30"],
    [1523, "5:33:30"], [1570, "5:35:30"], [1616, "5:37:35"], [1662, "5:39:35"], [1708, "5:41:30"], [1754, "5:43:25"],
    [1792, "5:45"], [1830, "5:46:35"], [1876, "5:48:30"], [1922, "5:50:25"], [1960, "5:52"], [1998, "5:53:35"],
    [2044, "5:55:35"], [2090, "5:57:30"], [2136, "5:59:25"], [2174, "6:01"], [2212, "6:02:35"], [2258, "6:04:30"],
    [2304, "6:06:25"], [2350, "6:08:25"], [2388, "6:10"], [2426, "6:11:40"], [2472, "6:13:35"]]);
```
